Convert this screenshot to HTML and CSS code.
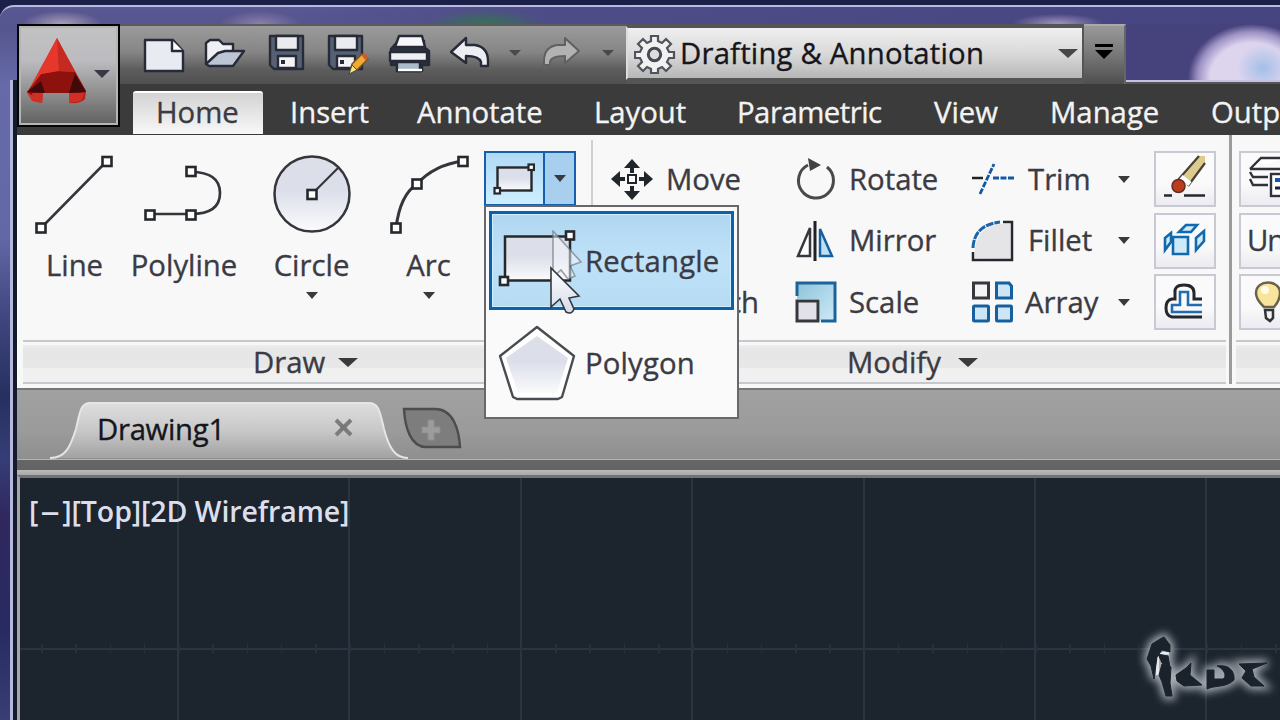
FILE: index.html
```html
<!DOCTYPE html>
<html lang="en">
<head>
<meta charset="utf-8">
<title>Drafting &amp; Annotation</title>
<link rel="stylesheet" href="styles.css">
</head>
<body>
<svg class="defs" width="0" height="0">
  <defs>
    <linearGradient id="face" x1="0" y1="0" x2="0" y2="1"><stop offset="0" stop-color="#dcdee8"/><stop offset=".45" stop-color="#dcdfea"/><stop offset="1" stop-color="#fbfbfc"/></linearGradient>
    <linearGradient id="aqua" x1="0" y1="0" x2="1" y2="1"><stop offset="0" stop-color="#8ec3da"/><stop offset="1" stop-color="#cdeaf8"/></linearGradient>
    <linearGradient id="arrow" x1="0" y1="0" x2="0" y2="1"><stop offset="0" stop-color="#fff"/><stop offset="1" stop-color="#d5dbe8"/></linearGradient>
    <linearGradient id="tabfill" x1="0" y1="0" x2="0" y2="1"><stop offset="0" stop-color="#dedede"/><stop offset=".5" stop-color="#c8c8c8"/><stop offset="1" stop-color="#a2a2a2"/></linearGradient>
    <linearGradient id="red" x1="0" y1="0" x2="1" y2="1"><stop offset="0" stop-color="#e8483c"/><stop offset="1" stop-color="#b81d17"/></linearGradient>
  </defs>
</svg>
<div class="window">
  <header class="chrome">
    <button class="app-button">
      <svg width="64" height="72" viewBox="26 31 64 72"><path d="M58 33 87 86 86 94Q82 99 70 98L70 88 44 88 43 98 33 96 28 88Z" fill="url(#red)"/><path d="M42 69 58 66 76 67 87 86 75 90 70 88 44 88 34 91 28 87Z" fill="#8d120e"/><path d="M58 33 60 66 42 69 32 82Z" fill="#e5372c"/><path d="M58 33 76 67 60 66Z" fill="#c52a21"/><path d="M42 76 46 88 28 87Z M76 69 70 88 87 87Z" fill="#42090a"/><path d="M33 88 44 88 43 98 34 96Z M70 88 85 88 82 96 70 98Z" fill="#cf2f25"/></svg>
      <i class="caret app-caret"></i>
    </button>
    <div class="bars">
      <div class="top-row">
        <div class="quick">
          <svg width="482" height="50" viewBox="143 27 482 50" fill="none" stroke="#272b38" stroke-width="2.4" stroke-linejoin="round">
            <path d="M145 39H173L183 50V70H145Z" fill="#e9ebf2"/><path d="M172 39V50H183" fill="#fff"/>
            <path d="M206 63V42L210 39H219L223 43H233V52" fill="#eef0f5"/><path d="M206 63 218 52 225 50H244L233 65H209Z" fill="#bcc5d3"/>
            <g id="disk"><path d="M270 35H303V68H274L270 64Z" fill="#566073"/><path d="M276 35H298V49H276Z" fill="#e9ebef"/><path d="M278 55H296V67H278Z" fill="#f4f4f7"/><path d="M283 59V63" stroke-width="4"/></g>
            <use href="#disk" x="59"/>
            <path d="M350 71 352 63 362 53 368 58 357 69Z" fill="#f0ac32" stroke="#7d5223" stroke-width="1.5"/><path d="M349 73 352 64 357 69Z" fill="#f5e68e" stroke="#444" stroke-width="1"/><path d="M363 53 367 58" stroke="#c95d2c" stroke-width="4"/>
            <path d="M391 48 398 40H424V46L429 50V64H422V70H397V64H391Z" fill="#2b303c"/><path d="M399 35H422L425 46H395Z" fill="#f7f8fa"/><path d="M390 51H427V60H390Z" fill="#eef0f4"/><path d="M397 61H420V70H397Z" fill="#a9bdcc"/><path d="M398 69H422" stroke="#fff"/>
            <path d="M451 51 466 37V44H475Q488 46 488 60V65H481V61Q479 55 466 55V62Z" fill="#eceef3"/>
            <path d="M579 50 565 37V44H557Q544 46 544 60V64H550V61Q551 55 565 55V62Z" fill="#b2b2b2" stroke="#606060" stroke-width="2"/>
            <path d="M509 49H521L515 55ZM602 49H614L608 55Z" fill="#4a4a4a" stroke="none"/>
          </svg>
        </div>
        <div class="workspace">
          <svg width="42" height="42" viewBox="634 32 42 42"><path d="M651 36h7v5l4 2 4-4 5 5-4 4 2 4h5v6h-5l-2 4 4 4-5 5-4-4-4 2v4h-7v-4l-4-2-4 4-5-5 4-4-2-4h-5v-6h5l2-4-4-4 5-5 4 4 4-2Z" fill="#f1f1f1" stroke="#50545c" stroke-width="2.2"/><circle cx="654.500" cy="54.500" r="6.2" fill="#ddd" stroke="#454a54" stroke-width="3"/></svg>
          <span class="ws-name">Drafting &amp; Annotation</span>
          <i class="caret ws-caret"></i>
        </div>
        <div class="customize"><i></i><b class="caret"></b></div>
        <div class="glass"></div>
      </div>
      <nav class="tabs">
        <span class="active">Home</span><span>Insert</span><span>Annotate</span><span>Layout</span><span class="tight">Parametric</span><span>View</span><span>Manage</span><span>Output</span>
      </nav>
    </div>
  </header>

  <main class="ribbon">
    <section class="panel draw">
      <div class="tools">
        <div class="tool t-line"><svg width="82" height="88" viewBox="34 151 82 88"><path d="M41 228 107 161" stroke="#34363b" stroke-width="2.5"/><g fill="#fff" stroke="#25282c" stroke-width="2.6"><rect x="36.5" y="223.500" width="9" height="9"/><rect x="102.500" y="157" width="9" height="9"/></g></svg><span>Line</span></div>
        <div class="tool t-pline"><svg width="82" height="88" viewBox="144 151 82 88"><path d="M151 214H192Q221 214 221 193T192 172" fill="none" stroke="#34363b" stroke-width="2.7"/><g fill="#fff" stroke="#25282c" stroke-width="2.6"><rect x="146.500" y="210.500" width="9" height="9"/><rect x="187.500" y="210.500" width="9" height="9"/><rect x="187.500" y="167" width="9" height="9"/></g></svg><span>Polyline</span></div>
        <div class="tool t-circle"><svg width="82" height="88" viewBox="271 151 82 88"><circle cx="312" cy="194" r="37.500" fill="url(#face)" stroke="#34363b" stroke-width="2.5"/><path d="M312 194 338 168" stroke="#34363b" stroke-width="2.2"/><rect x="307.500" y="190" width="9" height="9" fill="#fff" stroke="#25282c" stroke-width="2.6"/></svg><span>Circle</span><i class="caret"></i></div>
        <div class="tool t-arc"><svg width="82" height="88" viewBox="388 151 82 88"><path d="M396 228Q400 195 417 184Q434 165 463 161" fill="none" stroke="#34363b" stroke-width="3"/><g fill="#fff" stroke="#25282c" stroke-width="2.6"><rect x="391.500" y="223.500" width="9" height="9"/><rect x="412.500" y="179.500" width="9" height="9"/><rect x="458.500" y="157" width="9" height="9"/></g></svg><span>Arc</span><i class="caret"></i></div>
        <div class="split">
          <div class="split-main"><svg width="44" height="34" viewBox="491 162 44 34"><rect x="497.500" y="167.500" width="34" height="23" fill="url(#face)" stroke="#25282c" stroke-width="2.4"/><g fill="#fff" stroke="#25282c" stroke-width="2.200"><rect x="494.500" y="188" width="5.500" height="5.500"/><rect x="528.500" y="164.500" width="5.500" height="5.500"/></g></svg></div>
          <div class="split-arrow"><i class="caret"></i></div>
          <div class="menu">
            <div class="item selected"><svg width="91" height="94" viewBox="494 214 91 94">
              <rect x="505" y="236.500" width="65" height="44" fill="url(#face)" stroke="#25282c" stroke-width="2.5"/><g fill="#fff" stroke="#25282c" stroke-width="2.600"><rect x="500" y="277" width="8" height="8"/><rect x="566" y="231.500" width="8" height="8"/></g>
              </svg><span>Rectangle</span></div>
            <div class="item"><svg width="91" height="94" viewBox="494 315 91 94"><path d="M537 326 574 355 562 396 558 398H517L513 396 500 355Z" fill="#fff" stroke="#484b50" stroke-width="2.4" stroke-linejoin="round"/><path d="M537 335 568 357 557 392H518L506 357Z" fill="url(#face)"/></svg><span>Polygon</span></div>
            <svg class="pointer" width="34" height="88" viewBox="550 230 34 88"><path d="M554 231V277L562 270 569 279 576 276 571 266 582 262Z" fill="#f4f7fb" fill-opacity=".5" stroke="#68747f" stroke-opacity=".65" stroke-width="1.600"/><path d="M552 268V307L561 299 567 312Q573 315 575 309L570 298 580 296Z" fill="url(#arrow)" stroke="#333840" stroke-width="1.600"/></svg>
          </div>
        </div>
      </div>
      <footer>Draw<i class="caret"></i></footer>
    </section>

    <section class="panel modify">
      <div class="grid">
        <div class="cell"><svg width="44" height="44" viewBox="610 157 44 44"><path d="M632 159 640 168H634V173H630V168H624ZM632 200 640 191H634V186H630V191H624ZM611 179 620 171V177H625V181H620V187ZM653 179 644 171V177H639V181H644V187Z" fill="#222529"/><rect x="628" y="175" width="8" height="8" fill="#fff" stroke="#222529" stroke-width="2"/></svg><span>Move</span></div>
        <div class="cell"><svg width="44" height="44" viewBox="793 157 44 44"><path d="M827 167A17.500 17.500 0 1 1 808 165" fill="none" stroke="#4a4a4b" stroke-width="3"/><path d="M808 158 821 165 810 171Z" fill="#414244"/></svg><span>Rotate</span></div>
        <div class="cell c3"><svg width="44" height="44" viewBox="971 157 44 44"><path d="M972 178H983" stroke="#222" stroke-width="2.500"/><path d="M980 194 994 164M993 178H1014" stroke="#1458a3" stroke-width="2.800" stroke-dasharray="6 1.500"/></svg><span>Trim</span><i class="caret"></i></div>
        <div class="box"><svg width="56" height="50" viewBox="1156 156 56 50"><path d="M1178 183 1199 159H1205V166L1188 189Z" fill="#dccb8c"/><path d="M1178 183 1199 159M1205 166 1188 189" stroke="#493f36" stroke-width="2.200"/><path d="M1181 180 1190 187" stroke="#fff" stroke-width="5"/><circle cx="1178.500" cy="189" r="6.500" fill="#ba3c1c" stroke="#642d22" stroke-width="1.500"/><path d="M1164 198.500H1172M1184 198.500H1205" stroke="#25282c" stroke-width="2.600"/></svg></div>

        <div class="cell"></div>
        <div class="cell"><svg width="44" height="44" viewBox="793 218 44 44"><path d="M815 220V260" stroke="#202124" stroke-width="3"/><path d="M810 227V255H798Z" fill="#fff" stroke="#36383d" stroke-width="2.500"/><path d="M820 228V255H832Z" fill="#bde0f3" stroke="#1760a1" stroke-width="2.500"/></svg><span>Mirror</span></div>
        <div class="cell c3"><svg width="44" height="44" viewBox="971 218 44 44"><path d="M975 257V248Q977 228 997 223H1010V258Z" fill="#e5e5e8"/><path d="M973 251V259H1012V221H1003" fill="none" stroke="#25282c" stroke-width="2.500"/><path d="M973 247Q974 224 1000 221" fill="none" stroke="#1a64aa" stroke-width="3" stroke-dasharray="8 1"/></svg><span>Fillet</span><i class="caret"></i></div>
        <div class="box"><svg width="56" height="50" viewBox="1156 216 56 50"><g fill="#cceafa" stroke="#116aae" stroke-width="2.600"><path d="M1173 238H1188V255H1173Z"/><path d="M1179 233 1186 226H1197L1191 233Z"/><path d="M1165 239 1171 234V243L1165 251ZM1196 239 1204 232V242L1196 251Z"/></g></svg></div>

        <div class="cell"><b></b><span class="tight">Stretch</span></div>
        <div class="cell"><svg width="44" height="44" viewBox="793 280 44 44"><path d="M797 283H835V321H820V299H797Z" fill="url(#aqua)"/><path d="M797 296V283H835V321H821" fill="none" stroke="#1d6298" stroke-width="3"/><rect x="797" y="301" width="21" height="20" fill="#e2e1e9" stroke="#36383d" stroke-width="3"/></svg><span>Scale</span></div>
        <div class="cell c3 array"><svg width="44" height="44" viewBox="971 280 44 44"><rect x="973.500" y="283" width="15" height="15" fill="#f4f3f6" stroke="#36383d" stroke-width="3"/><g fill="#cce6f6" stroke="#17609f" stroke-width="3"><path d="M996.500 283H1009L1011.500 286V298H996.500Z"/><rect x="973.500" y="306" width="15" height="15" rx="1"/><rect x="996.500" y="306" width="15" height="15" rx="1"/></g></svg><span>Array</span><i class="caret"></i></div>
        <div class="box"><svg width="56" height="50" viewBox="1156 277 56 50"><g fill="none"><path d="M1202 300H1194V294Q1194 286 1184 286T1175 294V300H1172Q1166 301 1166 309T1172 318H1202" stroke="#24272c" stroke-width="3"/><path d="M1202 306H1188V293H1180V306H1172V313H1202" stroke="#236baf" stroke-width="2.600"/></g></svg></div>
      </div>
      <footer>Modify<i class="caret"></i></footer>
    </section>

    <section class="panel layers">
      <div class="stack">
        <div class="box"><svg width="42" height="50" viewBox="1240 155 42 50"><g fill="#fff" stroke="#30333a" stroke-width="2.400"><path d="M1249 171 1260 160H1285M1249 171H1282M1249 174 1252 179H1267M1249 181 1252 187H1267"/><rect x="1270" y="176" width="25" height="22"/></g><path d="M1274 182H1284" stroke="#1855b0" stroke-width="4"/><path d="M1274 190H1282" stroke="#222" stroke-width="3"/></svg></div>
        <div class="box label">Un</div>
        <div class="box"><svg width="42" height="50" viewBox="1241 276 42 50"><path d="M1263 306Q1256 299 1256 293C1256 279 1280 279 1280 293Q1280 300 1274 307H1264Z" fill="#f8e59b" stroke="#69624c" stroke-width="2.500"/><circle cx="1265" cy="290" r="4" fill="#fffbe5"/><path d="M1265 310H1273V318L1270 321 1266 318Z" fill="#f3f3f3" stroke="#30333a" stroke-width="2.500"/></svg></div>
      </div>
      <footer></footer>
    </section>
  </main>

  <div class="files">
    <div class="file">
      <svg class="file-shape" width="358" height="58" viewBox="50 400 358 58"><path d="M50 457C65 457 70 447 76 428 80 410 81 402 90 402H369C379 402 380 411 384 428 389 447 395 457 408 457Z" fill="url(#tabfill)"/><path d="M50 457C65 457 70 447 76 428 80 410 81 402 90 402H369C379 402 380 411 384 428 389 447 395 457 408 457" fill="none" stroke="#e5e5e5" stroke-width="2"/></svg>
      <span>Drawing1</span>
      <svg class="close" width="24" height="22" viewBox="332 417 24 22"><path d="M336 420 351 435M351 420 336 435" stroke="#7c7c7c" stroke-width="4"/><path d="M343.500 425V430" stroke="#777" stroke-width="6"/></svg>
    </div>
    <svg class="new-file" width="62" height="46" viewBox="400 404 62 46"><path d="M404 409H435C453 409 459 429 460 447H426C411 447 405 428 404 409Z" fill="#7d7d7d" stroke="#4c4c4c" stroke-width="2.400"/><path d="M428 420H434V427H440V433H434V440H428V433H422V427H428Z" fill="#9c9c9c" stroke="#8e8e8e"/></svg>
  </div>
  <div class="divider"></div>
  <div class="canvas">
    <div class="view-label">[<em>–</em>][Top][2D Wireframe]</div>
    <svg class="mark" width="160" height="112" viewBox="1120 608 160 112"><defs><path id="sign" d="M1152 645 1160 640 1164 638 1170 646V653L1162 651 1157 658 1154 680 1151 667 1147 660ZM1158 655 1168 657 1170 668 1162 664ZM1162 665 1171 668 1170 684 1172 697 1166 697 1162 683 1159 676ZM1176 676 1186 669 1191 664 1190 676 1202 686 1184 687 1177 682ZM1207 671 1214 671 1214 680 1223 680C1228 677 1223 669 1217 667 1229 665 1235 672 1234 681 1226 689 1215 686 1207 690ZM1239 665 1267 664 1252 670 1254 678 1264 687 1251 687 1242 679 1246 672Z"/></defs><use href="#sign" class="halo"/><path d="M1157 658Q1159 654 1169 654M1157.500 658V676" stroke="#e7eaec" stroke-width="3" fill="none"/><use href="#sign" fill="#1a222c" stroke="#1a222c" stroke-width="1"/></svg>
  </div>
</div>
</body>
</html>
```
FILE: styles.css
```css
* { box-sizing: border-box; }
body { margin: 0; width: 1280px; height: 720px; overflow: hidden; font: 500 29.3px/40px "Open Sans", "Noto Sans", sans-serif; letter-spacing: 0; color: #3b3b43; background: #1b2048; -webkit-text-stroke: .35px currentColor; }
svg { display: block; flex: none; }
.defs { position: absolute; }
.window {
  height: 720px; margin-top: 5px; padding: 17px 0 0 17px; display: flex; flex-direction: column;
  border-top: 2px solid #b9bae0; border-top-left-radius: 14px;
  background:
    linear-gradient(90deg, transparent 10px, #b4b8df 10px, #b4b8df 13px, #151a2b 13px, #151a2b 17px, transparent 17px) 0 73px no-repeat,
    radial-gradient(ellipse 40px 13px at 62px 17px, #aaa0b7, transparent),
    radial-gradient(ellipse 40px 13px at 260px 17px, #8b80aa, transparent),
    radial-gradient(ellipse 60px 16px at 485px 18px, #347452, transparent),
    radial-gradient(ellipse 45px 9px at 1058px 16px, #9c91ba, transparent),
    linear-gradient(90deg, transparent 300px, #47458188 500px, #474581) 0 0 / 100% 20px no-repeat,
    linear-gradient(#5a5791 0, #55558f 20px, #666ba8 80px, #6168a5 230px, #40467e 310px, #25305f 390px, #363d76 450px, #30285f 510px, #272a61 620px, #3b3f75);
}
.caret { width: 0; height: 0; flex: none; border: 6px solid transparent; border-top: 7px solid #3a3a3d; border-bottom: 0; }
.chrome { display: flex; height: 111px; flex: none; background: #3b3b3b; }
.app-button { width: 103px; height: 103px; flex: none; padding: 0 0 0 6px; border: 2px solid #050505; display: flex; align-items: center; gap: 5px; background: linear-gradient(#c2c2c2, #bcbcc0 35%, #929292 65%, #606060); box-shadow: inset 0 0 0 2px #b5b5b5; }
.app-button svg { margin-top: -8px; }
.app-caret { border-width: 8px 8.500px 0; border-top-color: #393946; margin-top: -4px; }
.bars { flex: 1; min-width: 0; }
.top-row { display: flex; height: 60px; background: #555; }
.quick { width: 506px; padding: 2px 0 0 23px; border-top: 2px solid #5b5b5b; background: linear-gradient(#9b9b9b, #858585 45%, #5d5d5d 75%, #4f4f4f); }
.workspace { width: 458px; height: 54px; margin-top: 2px; display: flex; align-items: center; padding-left: 6px; border: 2px solid #555; border-left-color: #ddd; background: linear-gradient(#efefef, #dadada 50%, #b7b7b7); color: #15151b; }
.ws-name { width: 375px; padding-left: 4px; margin-top: -1px; white-space: nowrap; letter-spacing: .2px; }
.ws-caret { margin-left: 7px; border-width: 9px 10px 0; border-top-color: #474747; }
.customize { width: 42px; padding-top: 20px; display: flex; flex-direction: column; align-items: center; gap: 3px; border-top: 2px solid #aaa; border-right: 2px solid #666; background: linear-gradient(#999, #777 50%, #4e4e4e); }
.customize i { width: 18px; height: 3px; background: #000; margin-top: -2px; }
.customize b { border-width: 9px 9px 0; border-top-color: #000; }
.glass { flex: 1; height: 58px; border-bottom: 2px solid #c3c1e3; background: radial-gradient(ellipse 26px 24px at 137px 44px, #a3bfe8, #a3bfe800), radial-gradient(ellipse 64px 54px at 126px 54px, #ddd5ee 65%, #9c91c3 85%, #46427c00), #46427c; }
.tabs { height: 51px; padding: 8px 0 0 13px; display: grid; grid-template-columns: 133px 127px 177px 143px 197px 116px 161px 100px; color: #f3f3f3; }
.tabs span { padding-left: 24px; white-space: nowrap; }
.tabs .active { width: 130px; height: 43px; background: linear-gradient(#d3d3d3, #f8f8f8); border-radius: 3px 3px 0 0; border-top: 2px solid #fff; margin-top: -1px; color: #3b3b43; line-height: 38px; padding-left: 23px; }
.tabs .tight { letter-spacing: -.5px; }
.cell .tight { letter-spacing: -.75px; }
.ribbon { display: flex; height: 253px; flex: none; background: #f8f8f8; border-left: 1px solid #fff; }
.panel { flex: none; height: 249px; display: flex; flex-direction: column; }
.panel footer { height: 44px; margin-top: auto; border: solid #c7c7ce; border-width: 2px 0; background: linear-gradient(#f3f3f3, #e6e6e6 20%, #e8e8e8 65%, #f0f0f0 66%); display: flex; align-items: center; gap: 13px; box-shadow: inset 0 3px #f8f8f8; }
footer .caret { border-width: 9px 10px 0; }
.draw { width: 574px; padding-left: 5px; }
.draw footer { padding-left: 230px; }
.tools { display: flex; padding-top: 16px; height: 205px; }
.tool { display: flex; flex-direction: column; align-items: center; white-space: nowrap; }
.tool span { margin-top: 6px; }
.tool .caret { margin-top: 7px; }
.t-line { width: 103px; }
.t-pline { width: 116px; }
.t-circle { width: 139px; }
.t-arc { width: 95px; }
.split { position: relative; width: 92px; height: 55px; display: flex; border: 2px solid #145fae; margin-left: 8px; flex: none; }
.split-main { width: 59px; padding: 9px 0 0 5px; background: linear-gradient(#b1d9f4, #cceeff); border-right: 2px solid #145fae; }
.split-arrow { flex: 1; display: flex; align-items: center; justify-content: center; background: #a9cfef; }
.menu { position: absolute; z-index: 3; left: -2px; top: 52px; width: 255px; height: 214px; background: #fafafa; border: 2px solid #68686c; padding: 4px 3px; display: flex; flex-direction: column; gap: 3px; }
.item { height: 99px; display: flex; align-items: center; padding-left: 2px; border: 3px solid transparent; letter-spacing: .15px; }
.item.selected { border-color: #0962ad; background: linear-gradient(#b0d6f0, #bfe2f8 50%, #b6dbf3); box-shadow: inset 0 0 0 1px #d4edfc; }
.item span { margin-top: 1px; }
.pointer { position: absolute; left: 63px; top: 23px; }
.modify { width: 640px; border-right: 3px solid #9b9b9f; }
.modify::before { content: ""; width: 2px; height: 196px; margin: 5px 0 -201px -1px; background: #d0d0d2; }
.modify footer { padding-left: 255px; margin-right: 3px; gap: 17px; }
.grid { display: grid; grid-template-columns: 183px 178px 183px 62px; grid-auto-rows: 56px; row-gap: 5.500px; padding: 16px 0 0 18px; }
.cell { display: flex; align-items: center; white-space: nowrap; }
.cell span { margin-left: 12px; width: 92px; margin-top: -1px; }
.cell b { width: 44px; }
.c3 span { margin-left: 13px; width: 90px; }
.array span { margin-left: 10px; width: 93px; }
.box { border: 2px solid #c9c9d4; height: 56px; background: linear-gradient(#fafafa 60%, #ebebf1); overflow: hidden; }
.layers { width: 50px; padding-left: 4px; }
.stack { display: grid; grid-auto-rows: 56px; gap: 5.500px; padding: 16px 0 0 3px; }
.label { padding: 5px 0 0 6px; letter-spacing: -1px; }
.files { height: 71px; flex: none; border-top: 2px solid #777; display: flex; background: linear-gradient(#a0a0a0, #9b9b9b 60%, #8e8e8e); }
.file { position: relative; width: 358px; margin: 11px 0 0 33px; display: flex; color: #15151b; padding-left: 47px; }
.file-shape { position: absolute; inset: 0; }
.file span { z-index: 1; width: 235px; padding-top: 8px; letter-spacing: -.3px; }
.file .close { z-index: 1; margin-top: 16px; }
.new-file { margin: 14px 0 0 -8px; }
.divider { height: 16px; flex: none; background: linear-gradient(#b5b5b5 1px, #666 1px, #636363 11px, #bababa 11px, #a9a9a9); }
.canvas { position: relative; flex: 1; border-left: 3px solid #a5a5a5; border-top: 3px solid #737373; background:
  repeating-linear-gradient(90deg, #27303b 0 1.500px, transparent 1.500px 34.280px) 21px 166px / 1240px 9px no-repeat,
  linear-gradient(#2b3440, #2b3440) 0 170px / 100% 2px no-repeat,
  repeating-linear-gradient(90deg, #2b3440 0 2px, transparent 2px 171.400px) 157px 0 / 100% 100% no-repeat,
  #1c242e; }
.view-label { padding: 13px 0 0 9px; font-size: 28.500px; font-weight: 600; color: #dcdfeb; letter-spacing: -.1px; white-space: nowrap; -webkit-text-stroke: 0; }
.view-label em { display: inline-block; font-style: normal; width: 24px; text-align: center; transform: scaleX(1.35) translateY(-1px); }
.mark { position: absolute; left: 1100px; top: 129px; }
.halo { fill: #c4c9cf; stroke: #c4c9cf; stroke-width: 7px; filter: blur(4px); opacity: .85; }
```
